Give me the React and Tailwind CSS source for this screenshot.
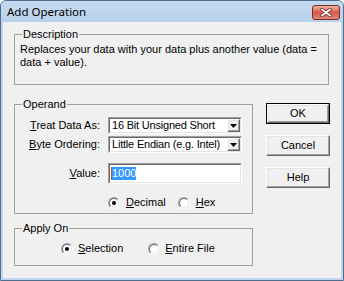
import React from 'react';

const sunkenOuter = 'border border-t-[#a0a0a0] border-l-[#a0a0a0] border-b-white border-r-white';
const sunkenInner = 'border border-t-[#696969] border-l-[#696969] border-b-[#e3e3e3] border-r-[#e3e3e3]';
const raisedOuter = 'border border-t-white border-l-white border-b-[#696969] border-r-[#696969]';
const raisedInner = 'border border-t-[#e3e3e3] border-l-[#e3e3e3] border-b-[#a0a0a0] border-r-[#a0a0a0]';

function Key({ children }) {
  return <span className="underline underline-offset-[1px]">{children}</span>;
}

function Combo({ value }) {
  return (
    <div className={`w-[134px] h-[17px] ${sunkenOuter}`}>
      <div className={`h-full flex bg-white ${sunkenInner}`}>
        <span className="flex-1 pl-[2px] leading-[13px] tracking-[-0.2px] whitespace-nowrap overflow-hidden">{value}</span>
        <div className={`w-[13px] h-full bg-[#f0f0f0] ${raisedOuter}`}>
          <div className={`h-full flex items-center justify-center ${raisedInner}`}>
            <svg width="7" height="4" viewBox="0 0 7 4">
              <path d="M0 0h7L3.5 4z" fill="#000" />
            </svg>
          </div>
        </div>
      </div>
    </div>
  );
}

function Radio({ checked }) {
  return (
    <div className="w-[12px] h-[12px] rounded-full border border-t-[#a0a0a0] border-l-[#a0a0a0] border-b-white border-r-white">
      <div className="w-full h-full rounded-full bg-white flex items-center justify-center border border-t-[#696969] border-l-[#696969] border-b-[#e3e3e3] border-r-[#e3e3e3]">
        {checked && <div className="w-[4px] h-[4px] rounded-full bg-black" />}
      </div>
    </div>
  );
}

function Button({ label, isDefault }) {
  const body = (
    <div className={`h-full ${raisedOuter}`}>
      <div className={`h-full flex items-center justify-center ${raisedInner}`}>{label}</div>
    </div>
  );
  return (
    <div className={`w-[64px] h-[21px] bg-[#f0f0f0] ${isDefault ? 'border border-black' : ''}`}>{body}</div>
  );
}

function Group({ title, legendLeft, children }) {
  return (
    <fieldset className="border border-[#a0a0a0] p-0 m-0 min-w-0">
      <legend className={`${legendLeft} px-[1px] leading-[14px]`}>{title}</legend>
      {children}
    </fieldset>
  );
}

export default function App() {
  return (
    <div
      className="w-[344px] h-[281px] flex flex-col bg-[#bdd4ec] border border-[#4f6d8f] rounded-t-[6px] text-[11px] text-black overflow-hidden"
      style={{ fontFamily: '"Liberation Sans", Arial, sans-serif' }}
    >
      <div className="h-[21px] flex items-center justify-between pl-[6px] pr-[3px] bg-gradient-to-b from-[#c4d9ef] to-[#b9d1ea]">
        <span className="text-[11.5px] leading-[16px]" style={{ fontFamily: '"Noto Sans", "Open Sans", sans-serif' }}>
          Add Operation
        </span>
        <div className="w-[28px] h-[15px] mt-[2px] rounded-[3px] border border-[#7a2a22] bg-gradient-to-b from-[#eeb4a6] via-[#d4594a] to-[#dd8a78] flex items-center justify-center">
          <svg width="12" height="9" viewBox="0 0 12 9">
            <path d="M2 1.5l8 6M10 1.5l-8 6" stroke="#6a2a24" strokeWidth="3.4" strokeLinecap="round" />
            <path d="M2 1.5l8 6M10 1.5l-8 6" stroke="#fff" strokeWidth="1.8" strokeLinecap="round" />
          </svg>
        </div>
      </div>

      <div className="flex-1 mx-[2px] mb-[2px] bg-[#f0f0f0]">
        <div className="ml-[11px] mt-[5px] w-[315px]">
          <Group title="Description" legendLeft="ml-[7px]">
            <div className="h-[43px] pt-[2px] pl-[5px] leading-[13px] whitespace-nowrap">
              Replaces your data with your data plus another value (data =
              <br />
              data + value).
            </div>
          </Group>
        </div>

        <div className="flex mt-[12px]">
          <div className="ml-[11px] w-[239px] flex flex-col">
            <Group title="Operand" legendLeft="ml-[7px]">
              <div className="flex flex-col pt-[6px] pb-[4px]">
                <div className="flex items-center h-[17px]">
                  <span className="w-[85px] text-right whitespace-nowrap"><Key>T</Key>reat Data As:</span>
                  <div className="ml-[8px]"><Combo value="16 Bit Unsigned Short" /></div>
                </div>
                <div className="flex items-center h-[17px] mt-[2px]">
                  <span className="w-[85px] text-right whitespace-nowrap"><Key>B</Key>yte Ordering:</span>
                  <div className="ml-[8px]"><Combo value="Little Endian (e.g. Intel)" /></div>
                </div>
                <div className="flex items-center h-[21px] mt-[10px]">
                  <span className="w-[85px] text-right whitespace-nowrap"><Key>V</Key>alue:</span>
                  <div className={`ml-[8px] w-[134px] h-[21px] ${sunkenOuter}`}>
                    <div className={`h-full flex items-center bg-white pl-[1px] ${sunkenInner}`}>
                      <span className="bg-[#3399ff] text-white leading-[13px] border-l border-[#9a5a2a]">1000</span>
                    </div>
                  </div>
                </div>
                <div className="flex items-center h-[13px] mt-[12px]">
                  <div className="ml-[93px]"><Radio checked /></div>
                  <span className="ml-[6px]"><Key>D</Key>ecimal</span>
                  <div className="ml-[12px]"><Radio /></div>
                  <span className="ml-[6px]"><Key>H</Key>ex</span>
                </div>
              </div>
            </Group>

            <div className="mt-[7px]">
              <Group title="Apply On" legendLeft="ml-[7px]">
                <div className="flex items-center h-[13px] mt-[7px] mb-[10px]">
                  <div className="ml-[46px]"><Radio checked /></div>
                  <span className="ml-[5px]"><Key>S</Key>election</span>
                  <div className="ml-[25px]"><Radio /></div>
                  <span className="ml-[5px]"><Key>E</Key>ntire File</span>
                </div>
              </Group>
            </div>
          </div>

          <div className="ml-[13px] mt-[6px] flex flex-col">
            <Button label="OK" isDefault />
            <div className="mt-[11px]"><Button label="Cancel" /></div>
            <div className="mt-[11px]"><Button label="Help" /></div>
          </div>
        </div>
      </div>
    </div>
  );
}
